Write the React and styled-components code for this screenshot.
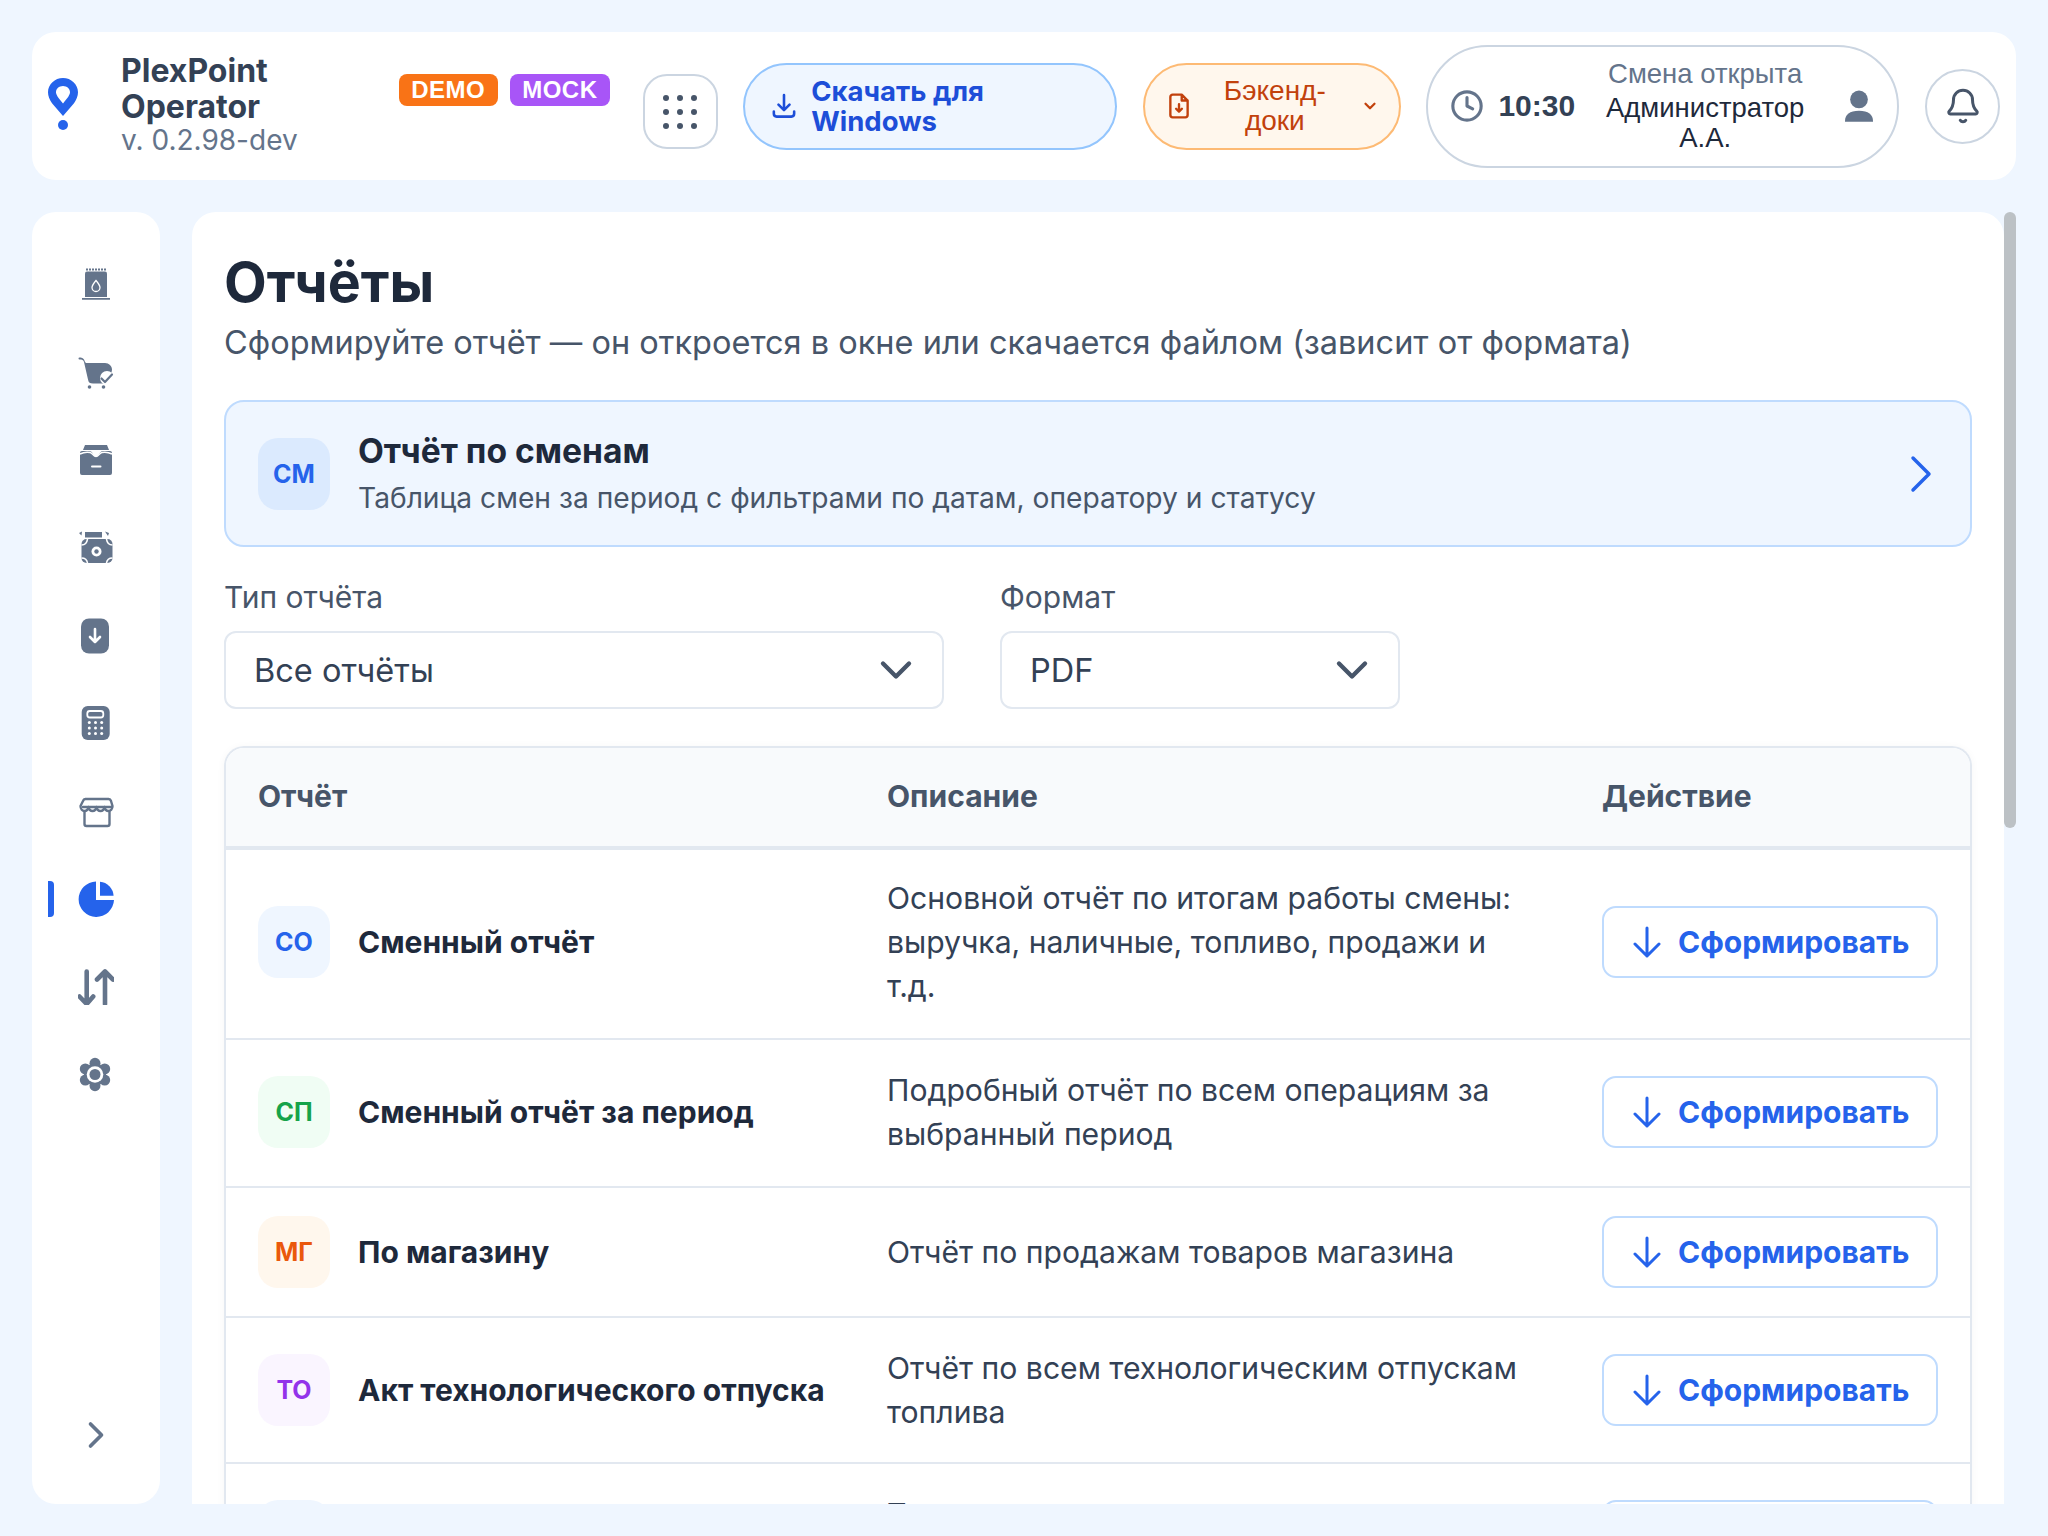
import React from 'react'
import styled, { createGlobalStyle } from 'styled-components'
import { Bell, ChevronDown, ChevronRight, Clock } from 'lucide-react'

const GlobalStyle = createGlobalStyle`
  html, body {
    margin: 0;
    background: #eff6ff;
    font-family: Inter, "Noto Sans", sans-serif;
    color: #1e293b;
  }
  * { box-sizing: border-box; }
`

const Page = styled.div`
  height: 1536px;
  padding: 32px;
  display: flex;
  flex-direction: column;
  gap: 32px;
  overflow: hidden;
`

const Header = styled.header`
  height: 148px;
  flex: none;
  display: flex;
  align-items: center;
  gap: 25.6px;
  padding: 0 16px;
  background: #fff;
  border-radius: 24px;
`

const Brand = styled.div`
  flex: 1;
  min-width: 0;
  display: flex;
  align-items: center;
  gap: 43px;
`

const BrandMark = styled.svg`
  flex: none;
  margin-bottom: 4px;
`

const BrandText = styled.div`
  width: 190px;
  flex: none;
  padding-bottom: 4px;
`

const BrandName = styled.div`
  font-size: 32px;
  line-height: 36px;
  font-weight: 700;
  color: #334155;
`

const Version = styled.div`
  font-size: 28px;
  line-height: 30px;
  color: #64748b;
`

const Badges = styled.div`
  display: flex;
  gap: 12px;
  align-self: flex-start;
  margin-top: 42px;
`

const Badge = styled.span`
  height: 32px;
  padding: 0 12.5px;
  display: flex;
  align-items: center;
  border-radius: 8px;
  background: ${props => props.$bg};
  color: #fff;
  font-family: "Liberation Sans", Arial, sans-serif;
  font-size: 24px;
  font-weight: 700;
  letter-spacing: 0.5px;
`

const AppsButton = styled.div`
  width: 75px;
  height: 75px;
  margin: 11px 0 0 7px;
  flex: none;
  display: grid;
  grid-template-columns: repeat(3, 6px);
  gap: 8px;
  place-content: center;
  border: 2px solid #cbd5e1;
  border-radius: 24px;
`

const Dot = styled.i`
  width: 6px;
  height: 6px;
  border-radius: 50%;
  background: #475569;
`

const Pill = styled.div`
  height: 87px;
  flex: none;
  width: ${props => props.$w}px;
  display: flex;
  align-items: center;
  border-radius: 44px;
  border: 2px solid ${props => props.$border};
  background: ${props => props.$bg};
  color: ${props => props.$color};
  line-height: 30px;
`

const DownloadPill = styled(Pill)`
  padding-left: 27px;
  gap: 15px;
  font-size: 27.5px;
  font-weight: 700;
`

const DownloadLabel = styled.span`
  width: 200px;
`

const DocsPill = styled(Pill)`
  padding: 0 20px 0 24px;
  font-family: "Liberation Sans", Arial, sans-serif;
  font-size: 28px;
`

const DocsLabel = styled.span`
  flex: 1;
  padding: 0 28px;
  text-align: center;
`

const ShiftPill = styled.div`
  width: 473px;
  height: 123px;
  flex: none;
  display: flex;
  align-items: center;
  padding: 0 24px 0 22px;
  border: 2px solid #cbd5e1;
  border-radius: 62px;
  font-family: "Liberation Sans", Arial, sans-serif;
`

const ShiftTime = styled.span`
  margin-left: 14px;
  font-size: 30px;
  font-weight: 700;
  color: #334155;
`

const ShiftInfo = styled.div`
  width: 220px;
  margin: 0 auto 0 20px;
  text-align: center;
  font-size: 27.5px;
  line-height: 30px;
  color: #1e293b;
`

const ShiftStatus = styled.div`
  color: #64748b;
  margin-bottom: 4px;
`

const BellButton = styled.div`
  width: 75px;
  height: 75px;
  flex: none;
  display: flex;
  align-items: center;
  justify-content: center;
  border: 2px solid #cbd5e1;
  border-radius: 50%;
  color: #475569;
`

const Body = styled.div`
  flex: 1;
  min-height: 0;
  display: flex;
  gap: 32px;
`

const Sidebar = styled.nav`
  width: 128px;
  flex: none;
  display: flex;
  flex-direction: column;
  padding: 45px 0 47px;
  background: #fff;
  border-radius: 24px;
`

const NavList = styled.div`
  display: flex;
  flex-direction: column;
  gap: 31.7px;
`

const NavItem = styled.div`
  position: relative;
  height: 56px;
  display: flex;
  align-items: center;
  justify-content: center;
  color: ${props => props.$active ? '#2563eb' : '#64748b'};
  &::before {
    content: '';
    display: ${props => props.$active ? 'block' : 'none'};
    position: absolute;
    left: 16px;
    top: 10px;
    width: 6px;
    height: 36px;
    border-radius: 0 4px 4px 0;
    background: #2563eb;
  }
`

const Collapse = styled.div`
  margin-top: auto;
  display: flex;
  justify-content: center;
  color: #64748b;
`

const Content = styled.main`
  position: relative;
  flex: 1;
  min-width: 0;
  padding-right: 12px;
  overflow: hidden;
`

const ScrollThumb = styled.div`
  position: absolute;
  top: 0;
  right: 0;
  width: 12px;
  height: 616px;
  border-radius: 6px;
  background: #bcc1c5;
`

const Card = styled.div`
  min-height: 100%;
  padding: 34px 32px 32px;
  background: #fff;
  border-radius: 24px 24px 0 0;
`

const Title = styled.h1`
  margin: 0;
  font-size: 55.5px;
  line-height: 72px;
  font-weight: 700;
  color: #1e293b;
`

const Subtitle = styled.p`
  margin: 3px 0 0;
  font-size: 32.5px;
  line-height: 44px;
  color: #475569;
`

const Banner = styled.div`
  height: 147px;
  margin-top: 35px;
  display: flex;
  align-items: center;
  padding: 0 17px 0 32px;
  gap: 28px;
  background: #eff6ff;
  border: 2px solid #bfdbfe;
  border-radius: 20px;
`

const Chip = styled.div`
  width: 72px;
  height: 72px;
  flex: none;
  display: flex;
  align-items: center;
  justify-content: center;
  border-radius: 20px;
  background: ${props => props.$bg};
  color: ${props => props.$color};
  font-size: 25px;
  font-weight: 700;
`

const BannerText = styled.div`
  flex: 1;
`

const BannerTitle = styled.div`
  font-size: 33.6px;
  line-height: 42px;
  font-weight: 700;
  color: #1e293b;
`

const BannerSub = styled.div`
  margin-top: 6px;
  font-size: 28.2px;
  line-height: 40px;
  color: #475569;
`

const Filters = styled.div`
  margin-top: 28px;
  display: flex;
  gap: 56px;
`

const Field = styled.div`
  width: ${props => props.$w}px;
`

const Label = styled.div`
  font-size: 30px;
  line-height: 44px;
  color: #475569;
`

const Select = styled.div`
  height: 78px;
  margin-top: 12px;
  display: flex;
  align-items: center;
  justify-content: space-between;
  padding: 0 20px 0 28px;
  border: 2px solid #e2e8f0;
  border-radius: 12px;
  font-size: 32.5px;
  color: #334155;
`

const Table = styled.div`
  margin-top: 37px;
  border: 2px solid #e2e8f0;
  border-bottom: none;
  border-radius: 20px 20px 0 0;
  box-shadow: 0 1px 8px rgba(15, 23, 42, 0.04);
  overflow: hidden;
`

const HeadRow = styled.div`
  display: grid;
  grid-template-columns: 629px 715px 1fr;
  align-items: center;
  height: 102px;
  padding: 0 32px 2px;
  background: #f8fafc;
  border-bottom: 4px solid #e2e8f0;
  font-size: 30px;
  font-weight: 700;
  color: #475569;
`

const Row = styled.div`
  display: grid;
  grid-template-columns: 629px 715px 1fr;
  align-items: center;
  padding: ${props => props.$top ?? 28}px 32px ${props => props.$bottom ?? 28}px;
  border-bottom: 2px solid #e2e8f0;
`

const NameCell = styled.div`
  display: flex;
  align-items: center;
  gap: 28px;
  font-size: 30px;
  font-weight: 700;
  color: #1e293b;
`

const Desc = styled.div`
  width: 640px;
  font-size: 30.15px;
  line-height: 44px;
  color: #334155;
`

const Action = styled.div`
  height: 72px;
  width: 336px;
  display: flex;
  align-items: center;
  gap: 17px;
  padding-left: 29px;
  border: 2px solid #bfdbfe;
  border-radius: 14px;
  color: #2563eb;
  font-size: 30px;
  font-weight: 650;
`

const Pin = () => (
  <BrandMark width="30" height="52" viewBox="0 0 30 52" fill="#2563eb">
    <path fillRule="evenodd" d="M15 0C6.8 0 0 6.4 0 14.2c0 3.8 1.5 7 4 11L15 38l11-12.8c2.5-4 4-7.2 4-11C30 6.4 23.2 0 15 0zm0 8c-4 0-7 2.8-7 6.3 0 2.6 2.5 6 7 11.2 4.5-5.2 7-8.6 7-11.2C22 10.8 19 8 15 8z" />
    <circle cx="15" cy="47" r="5" />
  </BrandMark>
)

const DownloadIcon = () => (
  <svg width="24" height="26" viewBox="0 0 26 28" fill="none" stroke="currentColor" strokeWidth="2.8" strokeLinecap="round" strokeLinejoin="round" style={{ flex: 'none' }}>
    <path d="M13 2v16M7 12.5l6 6 6-6M2 20v2.5a3 3 0 0 0 3 3h16a3 3 0 0 0 3-3V20" />
  </svg>
)

const FileIcon = () => (
  <svg width="20" height="26" viewBox="0 0 22 28" fill="none" stroke="currentColor" strokeWidth="2.6" strokeLinecap="round" strokeLinejoin="round" style={{ flex: 'none' }}>
    <path d="M14 1.5H4a2.5 2.5 0 0 0-2.5 2.5v20A2.5 2.5 0 0 0 4 26.5h14a2.5 2.5 0 0 0 2.5-2.5V8L14 1.5zM14 1.5V8h6.500M11 12v8M7.800 17l3.200 3.200 3.200-3.200" />
  </svg>
)

const PersonIcon = () => (
  <svg width="28" height="32" viewBox="0 0 30 34" fill="#64748b" style={{ flex: 'none' }}>
    <circle cx="15" cy="10" r="9.500" />
    <path d="M0 33c0-7 5-11 15-11s15 4 15 11v1H0z" />
  </svg>
)

const ArrowIcon = () => (
  <svg width="28" height="32" viewBox="0 0 28 32" fill="none" stroke="currentColor" strokeWidth="3" strokeLinecap="round" strokeLinejoin="round" style={{ flex: 'none' }}>
    <path d="M14 2v28M2 18l12 12 12-12" />
  </svg>
)

const Svg = ({ children }) => (
  <svg width="36" height="36" viewBox="0 0 36 36" fill="currentColor">{children}</svg>
)

const navIcons = [
  <Svg key="fuel">
    <path d="M9 4.500h18a2 2 0 0 1 2 2V30H7V6.500a2 2 0 0 1 2-2z" />
    <path d="M8 1.500h2v2H8zM11 1.500h2v2h-2zM14 1.500h2v2h-2zM17 1.500h2v2h-2zM20 1.500h2v2h-2zM23 1.500h2v2h-2zM26 1.500h2v2h-2zM4 31h28v1.800H4z" />
    <path d="M18 13.500c3 3.500 4 5 4 7a4 4 0 0 1-8 0c0-2 1-3.500 4-7z" fill="none" stroke="#fff" strokeWidth="1.300" />
  </Svg>,
  <Svg key="cart">
    <path d="M1.500 2.500c3 0 4.500 1 5.500 4.500l1 1h19c4 0 7 3 7 6.500 0 2-1 4-2 6.500-1 3-3 7.500-6.500 7.500H15c-3 0-4.500-1-5-4L6 7C5.500 5 4 4.500 1.500 4.500a1 1 0 0 1 0-2z" />
    <circle cx="11.500" cy="32" r="1.800" />
    <circle cx="25.500" cy="32" r="1.800" />
    <circle cx="29" cy="23" r="7" fill="#fff" />
    <path d="M23.500 23.500l3.500 3.500 7-7.500" fill="none" stroke="currentColor" strokeWidth="2.200" strokeLinecap="round" strokeLinejoin="round" />
  </Svg>,
  <Svg key="archive">
    <path d="M7 3h22l2 5H5z" />
    <path d="M4 9h7c2 0 3 1 4 3s1.500 2 3 2 2-.500 3-2 2-3 4-3h7a2 2 0 0 1 2 2v20a2 2 0 0 1-2 2H4a2 2 0 0 1-2-2V11a2 2 0 0 1 2-2z" />
    <path d="M14 24.500h8.500" fill="none" stroke="#fff" strokeWidth="2" strokeLinecap="round" />
    <path d="M2 12c3-1.500 7-2 10-1.500 2.500.500 3.500 4 6 4s3.500-3.500 6-4c3-.500 7 0 10 1.500" fill="none" stroke="#fff" strokeWidth="1.500" />
  </Svg>,
  <Svg key="cash">
    <path d="M7 2h17v5.500H7z" />
    <path d="M1 3l3-1.500-.500 4zM27 1.500l4 1.500-1 3z" />
    <rect x="3.500" y="9" width="31" height="24" rx="5" />
    <circle cx="18.500" cy="21.500" r="5" fill="#fff" />
    <circle cx="18.500" cy="21.500" r="2.200" />
    <path d="M3.500 15c3.500 0 5.500-2 6-6M34.500 15c-3.500 0-5.500-2-6-6M3.500 28c3.500 0 5.500 1.500 6 5M34.500 28c-3.500 0-5.500 1.500-6 5" fill="none" stroke="#fff" strokeWidth="1.600" />
  </Svg>,
  <Svg key="down">
    <rect x="3" y="0.500" width="28" height="35" rx="8" />
    <path d="M17 11v13M12 19l5 5 5-5" fill="none" stroke="#fff" strokeWidth="2.600" strokeLinecap="round" strokeLinejoin="round" />
  </Svg>,
  <Svg key="calc">
    <rect x="3.700" y="1" width="28" height="34" rx="6" />
    <rect x="9.300" y="6" width="16" height="6.500" rx="2.500" fill="none" stroke="#fff" strokeWidth="1.800" />
    {[17.500, 23, 28.500].map(y => [11.300, 17.500, 23.700].map(x => (
      <circle key={x + '-' + y} cx={x} cy={y} r="1.500" fill="#fff" />
    )))}
  </Svg>,
  <Svg key="store">
    <g fill="none" stroke="currentColor" strokeWidth="2.400" strokeLinejoin="round" strokeLinecap="round">
      <path d="M6.500 19V31a2 2 0 0 0 2 2h21a2 2 0 0 0 2-2V19" />
      <path d="M7.500 6h23a3 3 0 0 1 2.500 2l1.500 5c0 3-2 5-4 5s-3.500-1.500-4-4c-.5 2.500-2 4-4 4s-3.500-1.500-4-4c-.5 2.500-2 4-4 4s-3.500-1.500-4-4c-.5 2.500-2 4-4 4s-4-2-4-5L5 8a3 3 0 0 1 2.500-2z" />
      <path d="M5 14h29" />
    </g>
  </Svg>,
  <Svg key="pie">
    <path d="M18 0.500A17.700 17.700 0 1 0 36 19H18z" />
    <path d="M22 0.700A15 15 0 0 1 35.600 14.700H22z" />
  </Svg>,
  <Svg key="sort">
    <path d="M8.700 2.500V35M1.500 27.500l7.200 7.500 6.500-7.500M27 35V2.500M19 10.500L27 2.500l8 8" fill="none" stroke="currentColor" strokeWidth="4.600" strokeLinecap="round" strokeLinejoin="round" />
  </Svg>,
  <Svg key="cog">
    {[0, 60, 120, 180, 240, 300].map(a => (
      <circle
        key={a}
        cx={17 + 11.200 * Math.sin(a * Math.PI / 180)}
        cy={18.500 - 11.200 * Math.cos(a * Math.PI / 180)}
        r="5.500"
      />
    ))}
    <circle cx="17" cy="18.500" r="11" />
    <circle cx="17" cy="18.500" r="8.300" fill="#fff" />
    <circle cx="17" cy="18.500" r="5.500" />
  </Svg>
]

const rows = [
  {
    code: 'СО', bg: '#eff6ff', color: '#2563eb', name: 'Сменный отчёт', top: 26, bottom: 30,
    desc: 'Основной отчёт по итогам работы смены: выручка, наличные, топливо, продажи и т.д.'
  },
  {
    code: 'СП', bg: '#f0fdf4', color: '#16a34a', name: 'Сменный отчёт за период', bottom: 30,
    desc: 'Подробный отчёт по всем операциям за выбранный период'
  },
  {
    code: 'МГ', bg: '#fff7ed', color: '#ea580c', name: 'По магазину',
    desc: 'Отчёт по продажам товаров магазина'
  },
  {
    code: 'ТО', bg: '#faf5ff', color: '#9333ea', name: 'Акт технологического отпуска',
    desc: 'Отчёт по всем технологическим отпускам топлива'
  },
  {
    code: 'ТП', bg: '#eff6ff', color: '#2563eb', name: 'Топливо',
    desc: 'Топливо по резервуарам и движение за выбранный период'
  }
]

const App = () => {
  return (
    <Page>
      <GlobalStyle />
      <Header>
        <Brand>
          <Pin />
          <BrandText>
            <BrandName>PlexPoint Operator</BrandName>
            <Version>v. 0.2.98-dev</Version>
          </BrandText>
        </Brand>
        <Badges>
          <Badge $bg="#f97316">DEMO</Badge>
          <Badge $bg="#a855f7">MOCK</Badge>
        </Badges>
        <AppsButton>
          {Array.from({ length: 9 }).map((_, index) => <Dot key={index} />)}
        </AppsButton>
        <DownloadPill $w={374} $border="#93c5fd" $bg="#eff6ff" $color="#1d4ed8">
          <DownloadIcon />
          <DownloadLabel>Скачать для Windows</DownloadLabel>
        </DownloadPill>
        <DocsPill $w={258} $border="#fdba74" $bg="#fff7ed" $color="#c2410c">
          <FileIcon />
          <DocsLabel>Бэкенд-доки</DocsLabel>
          <ChevronDown size={18} strokeWidth={3} />
        </DocsPill>
        <ShiftPill>
          <Clock size={34} color="#64748b" strokeWidth={2.2} />
          <ShiftTime>10:30</ShiftTime>
          <ShiftInfo>
            <ShiftStatus>Смена открыта</ShiftStatus>
            Администратор А.А.
          </ShiftInfo>
          <PersonIcon />
        </ShiftPill>
        <BellButton>
          <Bell size={38} strokeWidth={1.9} />
        </BellButton>
      </Header>
      <Body>
        <Sidebar>
          <NavList>
            {navIcons.map((icon, index) => (
              <NavItem key={index} $active={index === 7}>{icon}</NavItem>
            ))}
          </NavList>
          <Collapse>
            <ChevronRight size={44} strokeWidth={2} />
          </Collapse>
        </Sidebar>
        <Content>
          <Card>
            <Title>Отчёты</Title>
            <Subtitle>Сформируйте отчёт — он откроется в окне или скачается файлом (зависит от формата)</Subtitle>
            <Banner>
              <Chip $bg="#dbeafe" $color="#2563eb">СМ</Chip>
              <BannerText>
                <BannerTitle>Отчёт по сменам</BannerTitle>
                <BannerSub>Таблица смен за период с фильтрами по датам, оператору и статусу</BannerSub>
              </BannerText>
              <ChevronRight size={64} color="#2563eb" strokeWidth={1.3} />
            </Banner>
            <Filters>
              <Field $w={720}>
                <Label>Тип отчёта</Label>
                <Select>
                  Все отчёты
                  <ChevronDown size={52} color="#475569" strokeWidth={2} />
                </Select>
              </Field>
              <Field $w={400}>
                <Label>Формат</Label>
                <Select>
                  PDF
                  <ChevronDown size={52} color="#475569" strokeWidth={2} />
                </Select>
              </Field>
            </Filters>
            <Table>
              <HeadRow>
                <span>Отчёт</span>
                <span>Описание</span>
                <span>Действие</span>
              </HeadRow>
              {rows.map(row => (
                <Row key={row.code} $top={row.top} $bottom={row.bottom}>
                  <NameCell>
                    <Chip $bg={row.bg} $color={row.color}>{row.code}</Chip>
                    {row.name}
                  </NameCell>
                  <Desc>{row.desc}</Desc>
                  <Action>
                    <ArrowIcon />
                    Сформировать
                  </Action>
                </Row>
              ))}
            </Table>
          </Card>
          <ScrollThumb />
        </Content>
      </Body>
    </Page>
  )
}

export default App
